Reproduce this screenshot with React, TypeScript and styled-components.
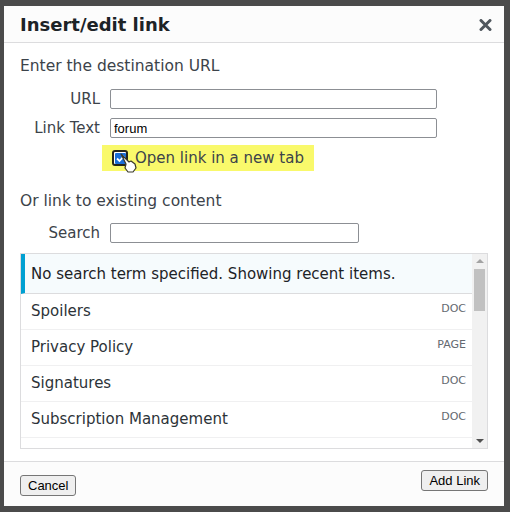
import React from 'react';
import styled, { createGlobalStyle } from 'styled-components';

const GlobalStyle = createGlobalStyle`
  html, body {
    margin: 0;
    padding: 0;
    background: #4b4b4b;
  }
  * {
    box-sizing: border-box;
  }
`;

const Backdrop = styled.div`
  width: 510px;
  height: 512px;
  padding: 6px 6px 6px 4px;
  background: #4b4b4b;
`;

const Modal = styled.div`
  width: 500px;
  height: 500px;
  background: #fff;
  display: flex;
  flex-direction: column;
  font-family: 'DejaVu Sans', Verdana, sans-serif;
  color: #3c434a;
`;

const Header = styled.div`
  height: 37px;
  flex: none;
  background: #fcfcfc;
  border-bottom: 1px solid #dcdcde;
  display: flex;
  align-items: center;
  justify-content: space-between;
  padding: 2px 12px 0 16px;
`;

const Title = styled.h1`
  margin: 0;
  font-size: 18px;
  font-weight: bold;
  color: #1d2327;
  line-height: 22px;
`;

const CloseButton = styled.button`
  border: 0;
  background: none;
  padding: 0;
  width: 13px;
  height: 12px;
  display: flex;
  cursor: pointer;
`;

const Body = styled.div`
  flex: 1;
  padding: 0 16px;
  display: flex;
  flex-direction: column;
`;

const Section = styled.p<{ $top: number }>`
  margin: ${(p) => p.$top}px 0 0;
  font-size: 15.5px;
  line-height: 22px;
  color: #3c434a;
`;

const Row = styled.div<{ $top: number }>`
  display: flex;
  align-items: center;
  gap: 10px;
  margin-top: ${(p) => p.$top}px;
  height: 20px;
`;

const Label = styled.label`
  width: 80px;
  text-align: right;
  font-size: 15px;
  color: #3c434a;
`;

const TextInput = styled.input<{ $width: number }>`
  width: ${(p) => p.$width}px;
  height: 20px;
  border: 1px solid #8c8f94;
  border-radius: 2px;
  padding: 0 3px;
  font-family: 'Liberation Sans', Arial, sans-serif;
  font-size: 13px;
  color: #000;
  background: #fff;
  outline: none;
`;

const CheckRow = styled.div`
  margin-top: 7px;
  height: 26px;
  display: flex;
`;

const Highlight = styled.label`
  position: relative;
  margin-left: 82px;
  padding: 0 10px;
  background: #f9f96b;
  display: flex;
  align-items: center;
  gap: 7px;
  font-size: 15px;
  color: #3c434a;
`;

const CheckBox = styled.span`
  width: 16px;
  height: 16px;
  border: 2px solid #26261a;
  border-radius: 3px;
  background: #fff;
  display: flex;
  align-items: center;
  justify-content: center;
`;

const CheckFill = styled.span`
  width: 11px;
  height: 11px;
  background: #1a6ed8;
  border-radius: 1px;
  display: flex;
`;

const Cursor = styled.svg`
  position: absolute;
  left: 18px;
  top: 8px;
`;

const ListBox = styled.div`
  margin-top: 10px;
  height: 196px;
  border: 1px solid #dcdcde;
  display: flex;
  overflow: hidden;
`;

const Items = styled.div`
  flex: 1;
  display: flex;
  flex-direction: column;
`;

const Notice = styled.div`
  height: 40px;
  flex: none;
  background: #f6fbfd;
  border-left: 4px solid #00a0d2;
  border-bottom: 1px solid #dcdcde;
  display: flex;
  align-items: center;
  padding-left: 6px;
  font-size: 15px;
  color: #1d2327;
`;

const Item = styled.div`
  height: 36px;
  flex: none;
  border-bottom: 1px solid #f0f0f1;
  display: flex;
  justify-content: space-between;
  padding: 0 6px 0 10px;
`;

const ItemTitle = styled.span`
  font-size: 15px;
  line-height: 35px;
  color: #2c3338;
`;

const ItemType = styled.span`
  margin-top: 9px;
  font-size: 11px;
  line-height: 12px;
  color: #646970;
`;

const ScrollTrack = styled.div`
  width: 15px;
  flex: none;
  background: #f1f1f1;
  display: flex;
  flex-direction: column;
  align-items: center;
`;

const ScrollArrow = styled.div<{ $down?: boolean }>`
  width: 0;
  height: 0;
  margin: ${(p) => (p.$down ? 'auto 0 5px' : '5px 0 0')};
  border-left: 4px solid transparent;
  border-right: 4px solid transparent;
  ${(p) =>
    p.$down
      ? 'border-top: 4px solid #505050;'
      : 'border-bottom: 4px solid #a3a3a3;'}
`;

const ScrollThumb = styled.div`
  width: 11px;
  height: 42px;
  margin-top: 6px;
  background: #c1c1c1;
`;

const Footer = styled.div`
  height: 45px;
  flex: none;
  background: #fcfcfc;
  border-top: 1px solid #dcdcde;
  display: flex;
  justify-content: space-between;
  align-items: flex-start;
  padding: 8px 16px 0;
`;

const Button = styled.button<{ $offset?: number }>`
  height: 21px;
  margin-top: ${(p) => p.$offset ?? 0}px;
  padding: 0 7px;
  border: 1px solid #767676;
  border-radius: 3px;
  background: #efefef;
  font-family: 'Liberation Sans', Arial, sans-serif;
  font-size: 13px;
  color: #000;
`;

const items = [
  { title: 'Spoilers', type: 'DOC' },
  { title: 'Privacy Policy', type: 'PAGE' },
  { title: 'Signatures', type: 'DOC' },
  { title: 'Subscription Management', type: 'DOC' },
  { title: '', type: '' },
];

export default function App() {
  return (
    <>
      <GlobalStyle />
      <Backdrop>
        <Modal>
          <Header>
            <Title>Insert/edit link</Title>
            <CloseButton aria-label="Close">
              <svg width="13" height="12" viewBox="0 0 13 12">
                <path d="M2 1.5 L11 10.5 M11 1.5 L2 10.5" stroke="#50575e" strokeWidth="3" strokeLinecap="round" />
              </svg>
            </CloseButton>
          </Header>
          <Body>
            <Section $top={12}>Enter the destination URL</Section>
            <Row $top={12}>
              <Label>URL</Label>
              <TextInput $width={327} defaultValue="" />
            </Row>
            <Row $top={9}>
              <Label>Link Text</Label>
              <TextInput $width={327} defaultValue="forum" />
            </Row>
            <CheckRow>
              <Highlight>
                <CheckBox>
                  <CheckFill>
                    <svg width="11" height="11" viewBox="0 0 11 11">
                      <path d="M2 5.5 L4.5 8 L9 3" stroke="#fff" strokeWidth="1.8" fill="none" />
                    </svg>
                  </CheckFill>
                </CheckBox>
                Open link in a new tab
                <Cursor width="18" height="20" viewBox="0 0 18 20">
                  <path
                    d="M1 1 L9 9 L11 8 L15 11 L16 15 L13 19 L8 19 L5 15 L6 11 Z"
                    fill="#fff"
                    stroke="#3a3a2a"
                    strokeWidth="1.2"
                    strokeLinejoin="round"
                  />
                </Cursor>
              </Highlight>
            </CheckRow>
            <Section $top={19}>Or link to existing content</Section>
            <Row $top={11}>
              <Label>Search</Label>
              <TextInput $width={249} defaultValue="" />
            </Row>
            <ListBox>
              <Items>
                <Notice>No search term specified. Showing recent items.</Notice>
                {items.map((it, i) => (
                  <Item key={i}>
                    <ItemTitle>{it.title}</ItemTitle>
                    <ItemType>{it.type}</ItemType>
                  </Item>
                ))}
              </Items>
              <ScrollTrack>
                <ScrollArrow />
                <ScrollThumb />
                <ScrollArrow $down />
              </ScrollTrack>
            </ListBox>
          </Body>
          <Footer>
            <Button $offset={5}>Cancel</Button>
            <Button>Add Link</Button>
          </Footer>
        </Modal>
      </Backdrop>
    </>
  );
}
